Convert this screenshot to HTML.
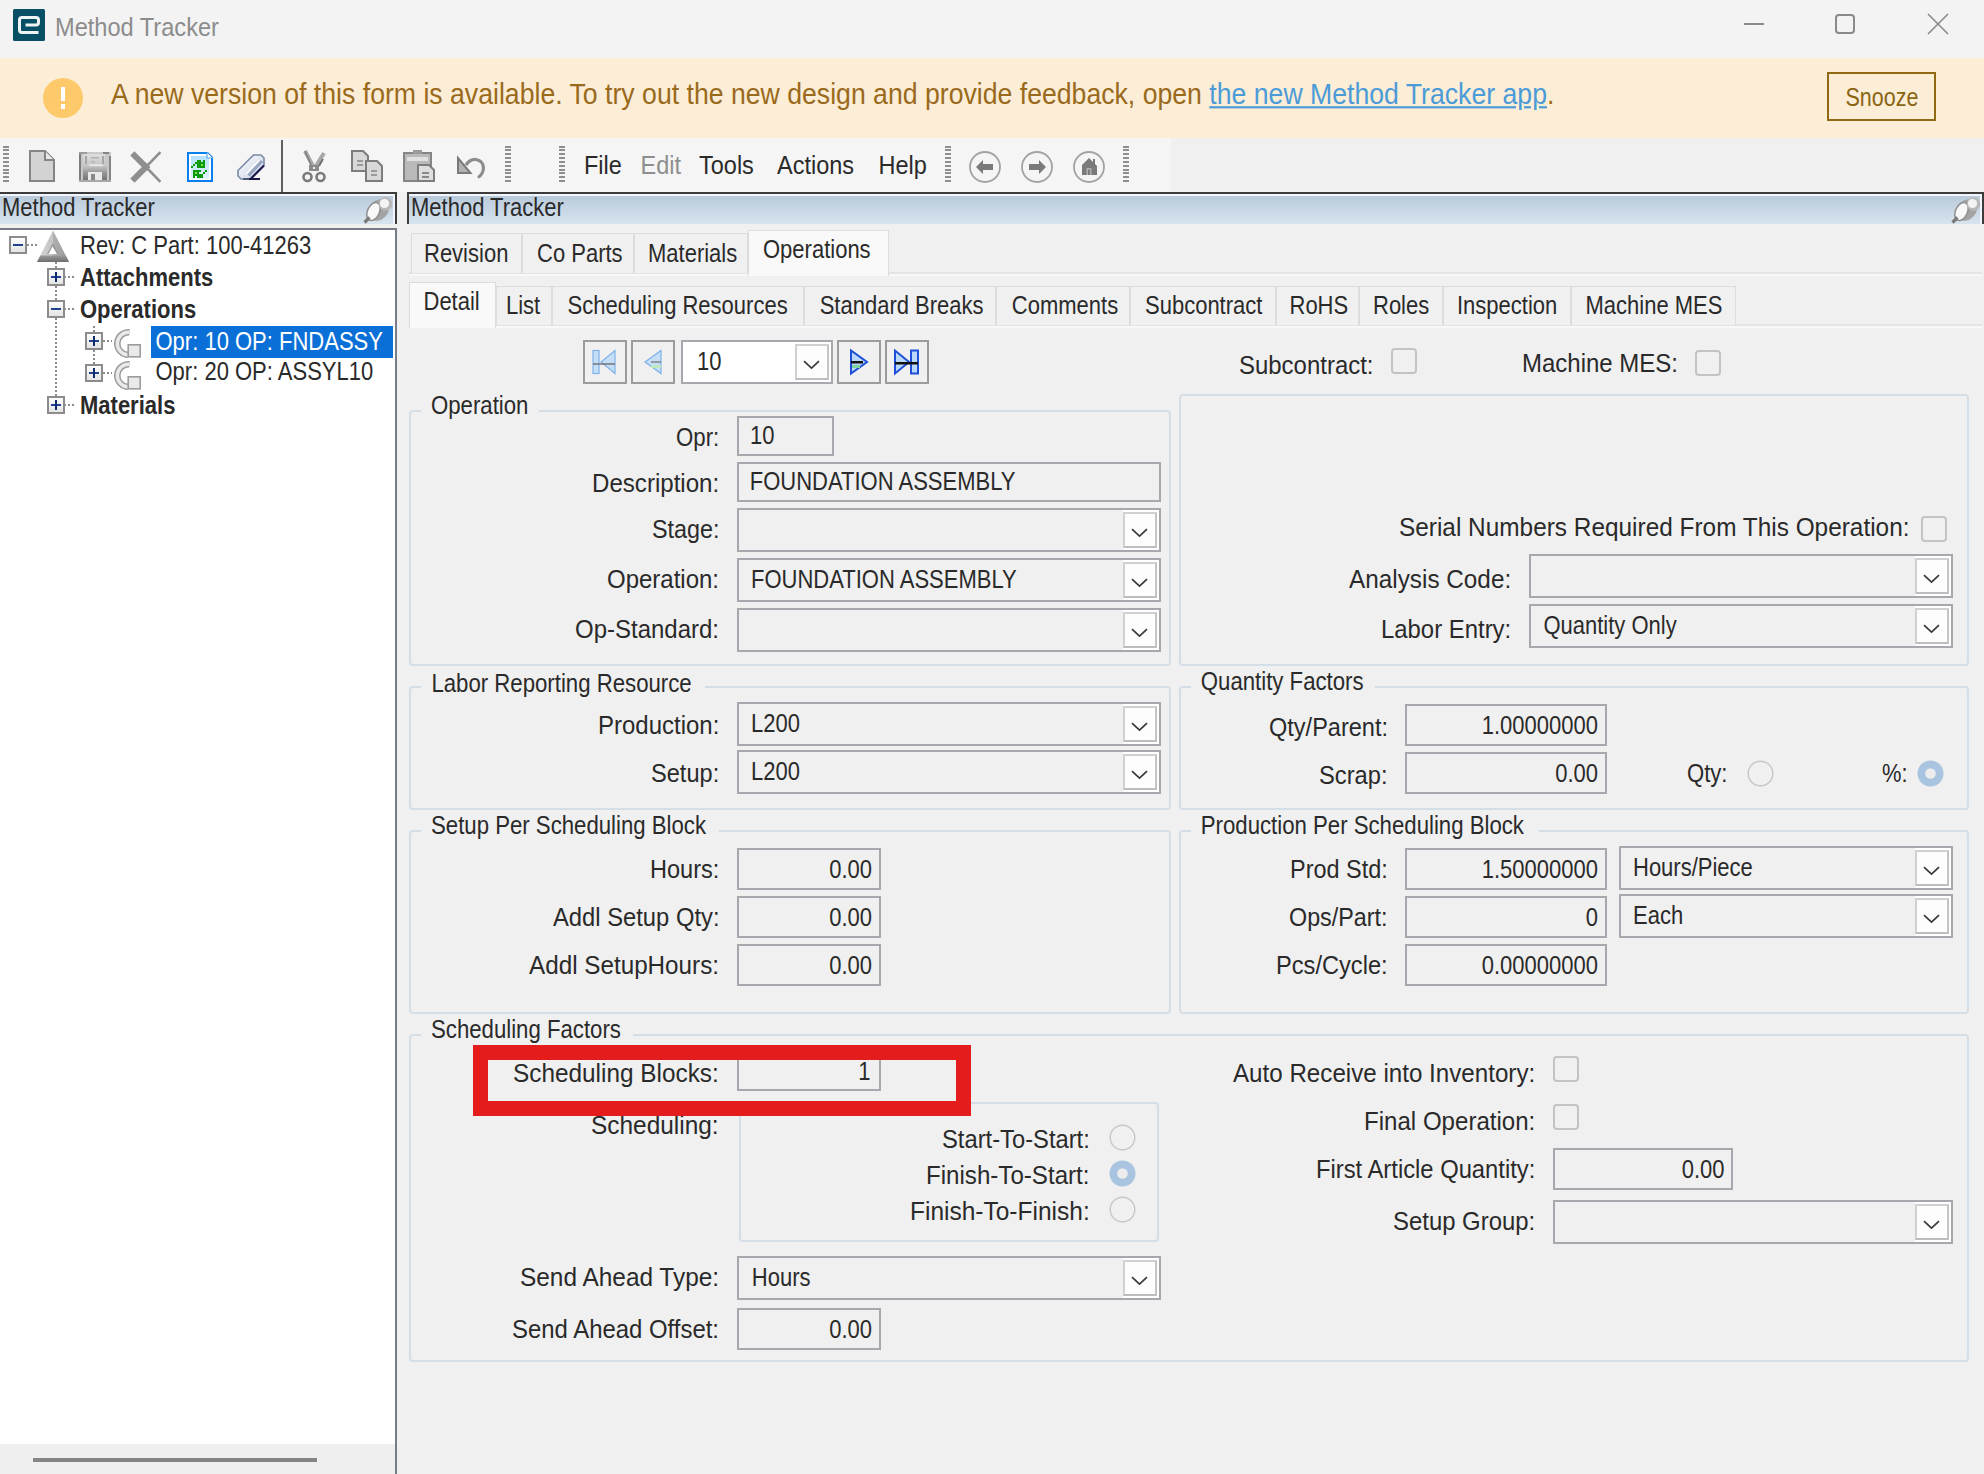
<!DOCTYPE html>
<html><head><meta charset="utf-8"><style>
html,body{margin:0;padding:0;width:1984px;height:1474px;overflow:hidden;background:#f0f0f0;font-family:"Liberation Sans", sans-serif;position:relative}
.t{position:absolute;white-space:nowrap;line-height:1;font-family:"Liberation Sans", sans-serif}
svg{display:block}
</style></head><body>
<div style="position:absolute;left:0px;top:0px;width:1984px;height:58px;background:#f3f3f3"></div>
<svg style="position:absolute;left:13px;top:9px" width="32" height="32" viewBox="0 0 32 32"><rect x="0" y="0" width="32" height="32" rx="1.5" fill="#064f64"/><path d="M12.5 16 H23 Q25.5 16 25.5 13.5 V11 Q25.5 8.5 23 8.5 H9 Q6.5 8.5 6.5 11 V21 Q6.5 23.5 9 23.5 H25.5" fill="none" stroke="#eef4f6" stroke-width="3"/></svg>
<div class="t" style="left:55.00px;top:17px;font-size:23.6px;color:#8c8c8c;transform:scale(1.0000,1.0840);transform-origin:left 19px;">Method Tracker</div>
<svg style="position:absolute;left:1740px;top:10px" width="28" height="28" viewBox="0 0 28 28"><line x1="4" y1="14" x2="24" y2="14" stroke="#8a8a8a" stroke-width="2"/></svg>
<svg style="position:absolute;left:1833px;top:12px" width="24" height="24" viewBox="0 0 24 24"><rect x="3" y="3" width="18" height="18" rx="3" fill="none" stroke="#8a8a8a" stroke-width="2"/></svg>
<svg style="position:absolute;left:1925px;top:11px" width="26" height="26" viewBox="0 0 26 26"><path d="M3 3 L23 23 M23 3 L3 23" stroke="#8a8a8a" stroke-width="1.6"/></svg>
<div style="position:absolute;left:0px;top:58px;width:1984px;height:80px;background:#fcedd6"></div>
<svg style="position:absolute;left:43px;top:78px" width="40" height="40" viewBox="0 0 40 40"><circle cx="20" cy="20" r="20" fill="#fdc96a"/><rect x="18" y="9" width="4" height="14" fill="#fff"/><rect x="18" y="26" width="4" height="5" fill="#fff"/></svg>
<div class="t" style="left:111.00px;top:82px;font-size:26.65px;color:#9a6a1c;transform:scale(1.0000,1.0908);transform-origin:left 22px;">A new version of this form is available. To try out the new design and provide feedback, open <span style="color:#4b9bd8;text-decoration:underline;text-underline-offset:2px">the new Method Tracker app</span>.</div>
<div style="position:absolute;left:1827px;top:72px;width:109px;height:49px;box-sizing:border-box;border:2px solid #8f6a12"></div>
<div class="t" style="left:1845.50px;top:89px;font-size:21.5px;color:#8a6514;transform:scale(1.0000,1.1898);transform-origin:left 17px;">Snooze</div>
<div style="position:absolute;left:0px;top:138px;width:1171px;height:54px;background:#f5f5f5"></div>
<svg style="position:absolute;left:3px;top:146px" width="6" height="38" viewBox="0 0 6 38"><rect x="0" y="0" width="6" height="2" fill="#8e8e8e"/><rect x="0" y="3" width="6" height="2" fill="#8e8e8e"/><rect x="0" y="7" width="6" height="2" fill="#8e8e8e"/><rect x="0" y="11" width="6" height="2" fill="#8e8e8e"/><rect x="0" y="15" width="6" height="2" fill="#8e8e8e"/><rect x="0" y="19" width="6" height="2" fill="#8e8e8e"/><rect x="0" y="23" width="6" height="2" fill="#8e8e8e"/><rect x="0" y="26" width="6" height="2" fill="#8e8e8e"/><rect x="0" y="30" width="6" height="2" fill="#8e8e8e"/><rect x="0" y="34" width="6" height="2" fill="#8e8e8e"/></svg>
<svg style="position:absolute;left:505px;top:146px" width="6" height="38" viewBox="0 0 6 38"><rect x="0" y="0" width="6" height="2" fill="#8e8e8e"/><rect x="0" y="3" width="6" height="2" fill="#8e8e8e"/><rect x="0" y="7" width="6" height="2" fill="#8e8e8e"/><rect x="0" y="11" width="6" height="2" fill="#8e8e8e"/><rect x="0" y="15" width="6" height="2" fill="#8e8e8e"/><rect x="0" y="19" width="6" height="2" fill="#8e8e8e"/><rect x="0" y="23" width="6" height="2" fill="#8e8e8e"/><rect x="0" y="26" width="6" height="2" fill="#8e8e8e"/><rect x="0" y="30" width="6" height="2" fill="#8e8e8e"/><rect x="0" y="34" width="6" height="2" fill="#8e8e8e"/></svg>
<svg style="position:absolute;left:559px;top:146px" width="6" height="38" viewBox="0 0 6 38"><rect x="0" y="0" width="6" height="2" fill="#8e8e8e"/><rect x="0" y="3" width="6" height="2" fill="#8e8e8e"/><rect x="0" y="7" width="6" height="2" fill="#8e8e8e"/><rect x="0" y="11" width="6" height="2" fill="#8e8e8e"/><rect x="0" y="15" width="6" height="2" fill="#8e8e8e"/><rect x="0" y="19" width="6" height="2" fill="#8e8e8e"/><rect x="0" y="23" width="6" height="2" fill="#8e8e8e"/><rect x="0" y="26" width="6" height="2" fill="#8e8e8e"/><rect x="0" y="30" width="6" height="2" fill="#8e8e8e"/><rect x="0" y="34" width="6" height="2" fill="#8e8e8e"/></svg>
<svg style="position:absolute;left:945px;top:146px" width="6" height="38" viewBox="0 0 6 38"><rect x="0" y="0" width="6" height="2" fill="#8e8e8e"/><rect x="0" y="3" width="6" height="2" fill="#8e8e8e"/><rect x="0" y="7" width="6" height="2" fill="#8e8e8e"/><rect x="0" y="11" width="6" height="2" fill="#8e8e8e"/><rect x="0" y="15" width="6" height="2" fill="#8e8e8e"/><rect x="0" y="19" width="6" height="2" fill="#8e8e8e"/><rect x="0" y="23" width="6" height="2" fill="#8e8e8e"/><rect x="0" y="26" width="6" height="2" fill="#8e8e8e"/><rect x="0" y="30" width="6" height="2" fill="#8e8e8e"/><rect x="0" y="34" width="6" height="2" fill="#8e8e8e"/></svg>
<svg style="position:absolute;left:1123px;top:146px" width="6" height="38" viewBox="0 0 6 38"><rect x="0" y="0" width="6" height="2" fill="#8e8e8e"/><rect x="0" y="3" width="6" height="2" fill="#8e8e8e"/><rect x="0" y="7" width="6" height="2" fill="#8e8e8e"/><rect x="0" y="11" width="6" height="2" fill="#8e8e8e"/><rect x="0" y="15" width="6" height="2" fill="#8e8e8e"/><rect x="0" y="19" width="6" height="2" fill="#8e8e8e"/><rect x="0" y="23" width="6" height="2" fill="#8e8e8e"/><rect x="0" y="26" width="6" height="2" fill="#8e8e8e"/><rect x="0" y="30" width="6" height="2" fill="#8e8e8e"/><rect x="0" y="34" width="6" height="2" fill="#8e8e8e"/></svg>
<div style="position:absolute;left:281px;top:140px;width:2px;height:52px;background:#606060"></div>
<svg style="position:absolute;left:29px;top:150px" width="26" height="32" viewBox="0 0 26 32"><path d="M1 1 H16 L25 10 V31 H1 Z" fill="#d3d3d3" stroke="#858585" stroke-width="2"/><path d="M16 1 V10 H25" fill="#e8e8e8" stroke="#858585" stroke-width="2"/></svg>
<svg style="position:absolute;left:79px;top:152px" width="32" height="30" viewBox="0 0 32 30"><defs><linearGradient id="sg1" x1="0" y1="0" x2="0" y2="1"><stop offset="0" stop-color="#dedede"/><stop offset="1" stop-color="#c6c6c6"/></linearGradient><linearGradient id="sg2" x1="0" y1="0" x2="0" y2="1"><stop offset="0" stop-color="#c4c4c4"/><stop offset="1" stop-color="#9c9c9c"/></linearGradient><linearGradient id="sg3" x1="0" y1="0" x2="0" y2="1"><stop offset="0" stop-color="#9a9a9a"/><stop offset="1" stop-color="#757575"/></linearGradient></defs><rect x="0" y="0" width="32" height="30" fill="#c8c8c8"/><rect x="4" y="2" width="22" height="12" fill="url(#sg1)"/><rect x="4" y="14" width="24" height="6" fill="url(#sg2)"/><rect x="4" y="20" width="24" height="8" fill="url(#sg3)"/><rect x="9" y="20" width="14" height="8" fill="#e9e9e9"/><rect x="12" y="22" width="4" height="6" fill="#888"/><rect x="0" y="2" width="2" height="26" fill="#7c7c7c"/><rect x="30" y="4" width="2" height="24" fill="#858585"/><rect x="0" y="0" width="8" height="2" fill="#9c9c9c"/><rect x="24" y="0" width="6" height="2" fill="#858585"/><rect x="0" y="28" width="32" height="2" fill="#a8a8a8"/><rect x="6" y="4" width="2" height="8" fill="#a6a6a6"/><rect x="23" y="4" width="2" height="8" fill="#a6a6a6"/><rect x="12" y="5" width="8" height="1.5" fill="#b0b0b0"/><rect x="12" y="9" width="4" height="1.5" fill="#b4b4b4"/><rect x="10" y="12.5" width="14" height="1.5" fill="#ececec"/></svg>
<svg style="position:absolute;left:128px;top:148px" width="40" height="38" viewBox="0 0 40 38"><g stroke="#8e8e8e" stroke-linecap="square"><path d="M6.5 7.5 L18 19" stroke-width="6"/><path d="M18 19 L31.5 5" stroke-width="2.6"/><path d="M6.5 30.5 L18 19" stroke-width="6"/><path d="M18 19 L31.5 33" stroke-width="2.6"/></g></svg>
<svg style="position:absolute;left:183px;top:148px" width="35" height="38" viewBox="0 0 35 38"><defs><linearGradient id="rg" x1="0" y1="0" x2="0" y2="1"><stop offset="0" stop-color="#b4e0fb"/><stop offset="1" stop-color="#e4f5ff"/></linearGradient></defs><path d="M5 5 H24.5 L29 9.5 V33 H5 Z" fill="#fff" stroke="#0a7ff0" stroke-width="2"/><rect x="8" y="8" width="18" height="23" fill="url(#rg)"/><path d="M24 4.5 V10 H29.5" fill="#fff" stroke="#5ea8ee" stroke-width="1.2"/><rect x="14" y="12" width="4" height="2" fill="#0a9a0a"/><rect x="20" y="12" width="2" height="2" fill="#0a9a0a"/><rect x="12" y="14" width="10" height="2" fill="#0a9a0a"/><rect x="10" y="16" width="2" height="2" fill="#0a9a0a"/><rect x="14" y="16" width="8" height="2" fill="#0a9a0a"/><rect x="8" y="18" width="2" height="2" fill="#0a9a0a"/><rect x="14" y="18" width="8" height="2" fill="#0a9a0a"/><rect x="10" y="22" width="8" height="2" fill="#0a9a0a"/><rect x="22" y="22" width="2" height="2" fill="#0a9a0a"/><rect x="10" y="24" width="6" height="2" fill="#0a9a0a"/><rect x="20" y="24" width="2" height="2" fill="#0a9a0a"/><rect x="10" y="26" width="10" height="2" fill="#0a9a0a"/><rect x="10" y="28" width="2" height="2" fill="#0a9a0a"/><rect x="14" y="28" width="6" height="2" fill="#0a9a0a"/><rect x="18" y="16" width="2" height="2" fill="#7ae04a"/><rect x="12" y="24" width="2" height="2" fill="#7ae04a"/></svg>
<svg style="position:absolute;left:233px;top:148px" width="38" height="38" viewBox="0 0 38 38"><defs><linearGradient id="eg" x1="0" y1="0" x2="1" y2="1"><stop offset="0" stop-color="#ffffff"/><stop offset="1" stop-color="#c5cee0"/></linearGradient></defs><path d="M5 22.5 L20.5 7 H28 L31 10 V17.5 L17.5 31 H8 L5 28 Z" fill="url(#eg)" stroke="#7c8aa6" stroke-width="1.6"/><path d="M29 13 L15.5 27.5" stroke="#98a6c2" stroke-width="3.2"/><path d="M26.5 12 L13 26" stroke="#ffffff" stroke-width="1.4"/><path d="M31 17.5 L18 30.5" stroke="#1d1548" stroke-width="2"/><path d="M16 31 H27" stroke="#1d1548" stroke-width="2"/><path d="M10 31 H16" stroke="#4a5a78" stroke-width="2"/></svg>
<svg style="position:absolute;left:298px;top:146px" width="34" height="40" viewBox="0 0 34 40"><path d="M7 5 L15 20" stroke="#a8a8a8" stroke-width="4"/><path d="M7 5 L13 19" stroke="#7c7c7c" stroke-width="1.5"/><path d="M26 7 L18 20" stroke="#a8a8a8" stroke-width="4"/><path d="M25 13 L21 20" stroke="#6c6c6c" stroke-width="1.8"/><rect x="11" y="19" width="10" height="6" fill="#8a8a8a"/><rect x="15" y="21" width="2" height="2" fill="#f0f0f0"/><circle cx="9.5" cy="31" r="4" fill="#f4f4f4" stroke="#7a7a7a" stroke-width="2.6"/><circle cx="22.5" cy="31" r="4" fill="#f4f4f4" stroke="#7a7a7a" stroke-width="2.6"/></svg>
<svg style="position:absolute;left:351px;top:150px" width="33" height="32" viewBox="0 0 33 32"><path d="M1 1 H12 L17 6 V21 H1 Z" fill="#d8d8d8" stroke="#7d7d7d" stroke-width="2"/><rect x="6" y="10" width="6" height="2" fill="#999"/><rect x="6" y="14" width="6" height="2" fill="#999"/><path d="M15 11 H26 L31 16 V31 H15 Z" fill="#d8d8d8" stroke="#7d7d7d" stroke-width="2"/><rect x="20" y="20" width="6" height="2" fill="#999"/><rect x="20" y="24" width="6" height="2" fill="#999"/></svg>
<svg style="position:absolute;left:403px;top:150px" width="33" height="32" viewBox="0 0 33 32"><rect x="1" y="3" width="27" height="28" fill="#b9b9b9" stroke="#858585" stroke-width="2"/><rect x="4" y="7" width="21" height="4" fill="#e0e0e0"/><rect x="10" y="0" width="9" height="4" fill="#9a9a9a"/><path d="M15 15 H26 L31 20 V31 H15 Z" fill="#dedede" stroke="#7d7d7d" stroke-width="2"/><rect x="19" y="22" width="7" height="2" fill="#888"/><rect x="19" y="26" width="7" height="2" fill="#888"/></svg>
<svg style="position:absolute;left:452px;top:148px" width="38" height="38" viewBox="0 0 38 38"><path d="M14 17 Q18 11 24 11.5 Q31.5 13 31.5 20 Q31 26.5 26 29.5" fill="none" stroke="#8c8c8c" stroke-width="3.2"/><path d="M6 10 V25 H18.5 Z" fill="#b2b2b2" stroke="#7a7a7a" stroke-width="2"/></svg>
<div class="t" style="left:584.00px;top:155px;font-size:23.5px;color:#2a2a2a;transform:scale(1.0000,1.0886);transform-origin:left 19px;">File</div>
<div class="t" style="left:640.50px;top:155px;font-size:23.5px;color:#8e8e8e;transform:scale(1.0000,1.0886);transform-origin:left 19px;">Edit</div>
<div class="t" style="left:699.00px;top:155px;font-size:23.5px;color:#2a2a2a;transform:scale(1.0000,1.0886);transform-origin:left 19px;">Tools</div>
<div class="t" style="left:777.00px;top:155px;font-size:23.5px;color:#2a2a2a;transform:scale(1.0000,1.0886);transform-origin:left 19px;">Actions</div>
<div class="t" style="left:878.50px;top:155px;font-size:23.5px;color:#2a2a2a;transform:scale(1.0000,1.0886);transform-origin:left 19px;">Help</div>
<svg style="position:absolute;left:968px;top:150px" width="34" height="34" viewBox="0 0 34 34"><circle cx="17" cy="17" r="15" fill="none" stroke="#a2a2a2" stroke-width="1.8"/><path d="M8 17 L15 10 V14 H25 V20 H15 V24 Z" fill="#7a7a7a"/></svg>
<svg style="position:absolute;left:1020px;top:150px" width="34" height="34" viewBox="0 0 34 34"><circle cx="17" cy="17" r="15" fill="none" stroke="#a2a2a2" stroke-width="1.8"/><path d="M26 17 L19 10 V14 H9 V20 H19 V24 Z" fill="#7a7a7a"/></svg>
<svg style="position:absolute;left:1072px;top:150px" width="34" height="34" viewBox="0 0 34 34"><circle cx="17" cy="17" r="15" fill="none" stroke="#a2a2a2" stroke-width="1.8"/><path d="M10 25 V15 L17 8 L21 12 V9 H23 V14 L25 16 V25 Z" fill="#7a7a7a"/><rect x="14.5" y="18" width="5" height="7" fill="#b0b0b0"/><rect x="16" y="19.5" width="2" height="5.5" fill="#7a7a7a"/></svg>
<div style="position:absolute;left:0px;top:192px;width:397px;height:2px;background:#3c3c3c"></div>
<div style="position:absolute;left:395px;top:192px;width:2px;height:32px;background:#3c3c3c"></div>
<div style="position:absolute;left:0px;top:194px;width:395px;height:30px;background:#f2f6fc"></div>
<div style="position:absolute;left:0px;top:196px;width:393px;height:28px;background:linear-gradient(#b9cada,#d7e4f0)"></div>
<div class="t" style="left:2.00px;top:198px;font-size:22px;color:#2a2a2a;transform:scale(1.0000,1.1628);transform-origin:left 18px;">Method Tracker</div>
<svg style="position:absolute;left:363px;top:196px" width="30" height="28" viewBox="0 0 30 28"><ellipse cx="15.5" cy="14" rx="12" ry="9.5" transform="rotate(-45 15.5 14)" fill="#a3a3a3"/><ellipse cx="10.5" cy="15.5" rx="6" ry="9.5" transform="rotate(25 10.5 15.5)" fill="#f8f8f8" stroke="#8e8e8e" stroke-width="1.6"/><circle cx="22.5" cy="8" r="6.8" fill="#b8b8b8"/><circle cx="21.5" cy="7.5" r="4.6" fill="#f4f4f4"/><path d="M1.5 26.5 L6.5 21.5" stroke="#7a7a7a" stroke-width="3.2"/></svg>
<div style="position:absolute;left:0px;top:228px;width:397px;height:1246px;background:#fff"></div>
<div style="position:absolute;left:0px;top:228px;width:397px;height:2px;background:#747b87"></div>
<div style="position:absolute;left:395px;top:228px;width:2px;height:1246px;background:#777c86"></div>
<div style="position:absolute;left:0px;top:1444px;width:395px;height:30px;background:#efefef"></div>
<div style="position:absolute;left:33px;top:1458px;width:284px;height:4px;background:#858585"></div>
<div style="position:absolute;left:55px;top:262px;width:2px;height:143px;background:repeating-linear-gradient(180deg,#8c8c8c 0 2px,transparent 2px 4px)"></div>
<div style="position:absolute;left:27px;top:244px;width:10px;height:2px;background:repeating-linear-gradient(90deg,#8c8c8c 0 2px,transparent 2px 4px)"></div>
<div style="position:absolute;left:64px;top:276px;width:12px;height:2px;background:repeating-linear-gradient(90deg,#8c8c8c 0 2px,transparent 2px 4px)"></div>
<div style="position:absolute;left:64px;top:308px;width:12px;height:2px;background:repeating-linear-gradient(90deg,#8c8c8c 0 2px,transparent 2px 4px)"></div>
<div style="position:absolute;left:64px;top:404px;width:12px;height:2px;background:repeating-linear-gradient(90deg,#8c8c8c 0 2px,transparent 2px 4px)"></div>
<div style="position:absolute;left:93px;top:326px;width:2px;height:40px;background:repeating-linear-gradient(180deg,#8c8c8c 0 2px,transparent 2px 4px)"></div>
<div style="position:absolute;left:103px;top:340px;width:9px;height:2px;background:repeating-linear-gradient(90deg,#8c8c8c 0 2px,transparent 2px 4px)"></div>
<div style="position:absolute;left:103px;top:372px;width:9px;height:2px;background:repeating-linear-gradient(90deg,#8c8c8c 0 2px,transparent 2px 4px)"></div>
<svg style="position:absolute;left:9px;top:236px" width="18" height="18" viewBox="0 0 18 18"><defs><linearGradient id="pg" x1="0" y1="0" x2="0" y2="1"><stop offset="0" stop-color="#ffffff"/><stop offset="1" stop-color="#e2e2e2"/></linearGradient></defs><rect x="1" y="1" width="16" height="16" fill="url(#pg)" stroke="#8c8c8c" stroke-width="2"/><rect x="4" y="8" width="10" height="2" fill="#22418f"/></svg>
<svg style="position:absolute;left:37px;top:230px" width="32" height="32" viewBox="0 0 32 32"><defs><linearGradient id="tg" x1="0" y1="0" x2="1" y2="0"><stop offset="0" stop-color="#d6d6d6"/><stop offset="0.5" stop-color="#c4c4c4"/><stop offset="0.51" stop-color="#b0b0b0"/><stop offset="1" stop-color="#989898"/></linearGradient><linearGradient id="tg2" x1="0" y1="0" x2="0" y2="1"><stop offset="0" stop-color="#9a9a9a"/><stop offset="1" stop-color="#6e6e6e"/></linearGradient></defs><path d="M16 0.5 L32 32 H0 Z" fill="url(#tg)"/><path d="M3.3 25.5 H28.7 L32 32 H0 Z" fill="url(#tg2)"/><path d="M16 13 L22 24 H10 Z" fill="#9a9a9a"/><path d="M15.5 16.5 L20 24 H11.5 Z" fill="#ffffff"/></svg>
<div class="t" style="left:80.00px;top:236px;font-size:22px;color:#2a2a2a;transform:scale(1.0000,1.1628);transform-origin:left 18px;">Rev: C Part: 100-41263</div>
<svg style="position:absolute;left:47px;top:268px" width="18" height="18" viewBox="0 0 18 18"><defs><linearGradient id="pg" x1="0" y1="0" x2="0" y2="1"><stop offset="0" stop-color="#ffffff"/><stop offset="1" stop-color="#e2e2e2"/></linearGradient></defs><rect x="1" y="1" width="16" height="16" fill="url(#pg)" stroke="#8c8c8c" stroke-width="2"/><rect x="4" y="8" width="10" height="2" fill="#22418f"/><rect x="8" y="4" width="2" height="10" fill="#102a70"/></svg>
<div class="t" style="left:80.00px;top:268px;font-size:22px;color:#2a2a2a;font-weight:bold;transform:scale(1.0000,1.1628);transform-origin:left 18px;">Attachments</div>
<svg style="position:absolute;left:47px;top:300px" width="18" height="18" viewBox="0 0 18 18"><defs><linearGradient id="pg" x1="0" y1="0" x2="0" y2="1"><stop offset="0" stop-color="#ffffff"/><stop offset="1" stop-color="#e2e2e2"/></linearGradient></defs><rect x="1" y="1" width="16" height="16" fill="url(#pg)" stroke="#8c8c8c" stroke-width="2"/><rect x="4" y="8" width="10" height="2" fill="#22418f"/></svg>
<div class="t" style="left:80.00px;top:300px;font-size:22px;color:#2a2a2a;font-weight:bold;transform:scale(1.0000,1.1628);transform-origin:left 18px;">Operations</div>
<svg style="position:absolute;left:85px;top:332px" width="18" height="18" viewBox="0 0 18 18"><defs><linearGradient id="pg" x1="0" y1="0" x2="0" y2="1"><stop offset="0" stop-color="#ffffff"/><stop offset="1" stop-color="#e2e2e2"/></linearGradient></defs><rect x="1" y="1" width="16" height="16" fill="url(#pg)" stroke="#8c8c8c" stroke-width="2"/><rect x="4" y="8" width="10" height="2" fill="#22418f"/><rect x="8" y="4" width="2" height="10" fill="#102a70"/></svg>
<svg style="position:absolute;left:113px;top:328px" width="30" height="30" viewBox="0 0 30 30"><path d="M16.5 4.2 A11.2 11.2 0 1 0 15 27" fill="none" stroke="#9c9c9c" stroke-width="6.5"/><path d="M16.5 4.2 A11.2 11.2 0 1 0 15 27" fill="none" stroke="#e9e9e9" stroke-width="3.5"/><rect x="15.2" y="16.8" width="12" height="12" fill="#e9e9e9" stroke="#9c9c9c" stroke-width="1.6"/></svg>
<div style="position:absolute;left:151px;top:326px;width:242px;height:32px;background:#0a6fd6"></div>
<div class="t" style="left:155.50px;top:332px;font-size:22px;color:#fff;transform:scale(1.0000,1.1628);transform-origin:left 18px;">Opr: 10 OP: FNDASSY</div>
<svg style="position:absolute;left:85px;top:364px" width="18" height="18" viewBox="0 0 18 18"><defs><linearGradient id="pg" x1="0" y1="0" x2="0" y2="1"><stop offset="0" stop-color="#ffffff"/><stop offset="1" stop-color="#e2e2e2"/></linearGradient></defs><rect x="1" y="1" width="16" height="16" fill="url(#pg)" stroke="#8c8c8c" stroke-width="2"/><rect x="4" y="8" width="10" height="2" fill="#22418f"/><rect x="8" y="4" width="2" height="10" fill="#102a70"/></svg>
<svg style="position:absolute;left:113px;top:360px" width="30" height="30" viewBox="0 0 30 30"><path d="M16.5 4.2 A11.2 11.2 0 1 0 15 27" fill="none" stroke="#9c9c9c" stroke-width="6.5"/><path d="M16.5 4.2 A11.2 11.2 0 1 0 15 27" fill="none" stroke="#e9e9e9" stroke-width="3.5"/><rect x="15.2" y="16.8" width="12" height="12" fill="#e9e9e9" stroke="#9c9c9c" stroke-width="1.6"/></svg>
<div class="t" style="left:155.50px;top:362px;font-size:22px;color:#2a2a2a;transform:scale(1.0000,1.1628);transform-origin:left 18px;">Opr: 20 OP: ASSYL10</div>
<svg style="position:absolute;left:47px;top:396px" width="18" height="18" viewBox="0 0 18 18"><defs><linearGradient id="pg" x1="0" y1="0" x2="0" y2="1"><stop offset="0" stop-color="#ffffff"/><stop offset="1" stop-color="#e2e2e2"/></linearGradient></defs><rect x="1" y="1" width="16" height="16" fill="url(#pg)" stroke="#8c8c8c" stroke-width="2"/><rect x="4" y="8" width="10" height="2" fill="#22418f"/><rect x="8" y="4" width="2" height="10" fill="#102a70"/></svg>
<div class="t" style="left:80.00px;top:396px;font-size:22px;color:#2a2a2a;font-weight:bold;transform:scale(1.0000,1.1628);transform-origin:left 18px;">Materials</div>
<div style="position:absolute;left:407px;top:192px;width:1577px;height:2px;background:#3c3c3c"></div>
<div style="position:absolute;left:407px;top:192px;width:2px;height:32px;background:#3c3c3c"></div>
<div style="position:absolute;left:1982px;top:192px;width:2px;height:32px;background:#3c3c3c"></div>
<div style="position:absolute;left:409px;top:194px;width:1573px;height:30px;background:#f2f6fc"></div>
<div style="position:absolute;left:409px;top:196px;width:1571px;height:28px;background:linear-gradient(#b9cada,#d7e4f0)"></div>
<div class="t" style="left:411.00px;top:198px;font-size:22px;color:#2a2a2a;transform:scale(1.0000,1.1628);transform-origin:left 18px;">Method Tracker</div>
<svg style="position:absolute;left:1951px;top:196px" width="30" height="28" viewBox="0 0 30 28"><ellipse cx="15.5" cy="14" rx="12" ry="9.5" transform="rotate(-45 15.5 14)" fill="#a3a3a3"/><ellipse cx="10.5" cy="15.5" rx="6" ry="9.5" transform="rotate(25 10.5 15.5)" fill="#f8f8f8" stroke="#8e8e8e" stroke-width="1.6"/><circle cx="22.5" cy="8" r="6.8" fill="#b8b8b8"/><circle cx="21.5" cy="7.5" r="4.6" fill="#f4f4f4"/><path d="M1.5 26.5 L6.5 21.5" stroke="#7a7a7a" stroke-width="3.2"/></svg>
<div style="position:absolute;left:409px;top:272px;width:1573px;height:3px;background:#e4e4e4"></div>
<div style="position:absolute;left:409px;top:274px;width:1573px;height:2px;background:#f8f8f8"></div>
<div style="position:absolute;left:411px;top:233px;width:111px;height:40px;box-sizing:border-box;background:#f0f0f0;border:1px solid #dcdcdc;border-bottom:none"></div>
<div class="t" style="left:424.00px;top:244px;font-size:22px;color:#2a2a2a;transform:scale(1.0000,1.1628);transform-origin:left 18px;">Revision</div>
<div style="position:absolute;left:522px;top:233px;width:112px;height:40px;box-sizing:border-box;background:#f0f0f0;border:1px solid #dcdcdc;border-bottom:none"></div>
<div class="t" style="left:537.00px;top:244px;font-size:22px;color:#2a2a2a;transform:scale(1.0000,1.1628);transform-origin:left 18px;">Co Parts</div>
<div style="position:absolute;left:634px;top:233px;width:114px;height:40px;box-sizing:border-box;background:#f0f0f0;border:1px solid #dcdcdc;border-bottom:none"></div>
<div class="t" style="left:648.00px;top:244px;font-size:22px;color:#2a2a2a;transform:scale(1.0000,1.1628);transform-origin:left 18px;">Materials</div>
<div style="position:absolute;left:748px;top:230px;width:141px;height:46px;box-sizing:border-box;background:#f9f9f9;border:1px solid #dcdcdc;border-bottom:none"></div>
<div class="t" style="left:763.00px;top:240px;font-size:22px;color:#2a2a2a;transform:scale(1.0000,1.1628);transform-origin:left 18px;">Operations</div>
<div style="position:absolute;left:409px;top:324px;width:1573px;height:3px;background:#e4e4e4"></div>
<div style="position:absolute;left:409px;top:326px;width:1573px;height:2px;background:#f8f8f8"></div>
<div style="position:absolute;left:496px;top:286px;width:56px;height:39px;box-sizing:border-box;background:#f0f0f0;border:1px solid #dcdcdc;border-bottom:none"></div>
<div class="t" style="left:506.00px;top:296px;font-size:22px;color:#2a2a2a;transform:scale(1.0000,1.1628);transform-origin:left 18px;">List</div>
<div style="position:absolute;left:552px;top:286px;width:252px;height:39px;box-sizing:border-box;background:#f0f0f0;border:1px solid #dcdcdc;border-bottom:none"></div>
<div class="t" style="left:567.50px;top:296px;font-size:22px;color:#2a2a2a;transform:scale(1.0000,1.1628);transform-origin:left 18px;">Scheduling Resources</div>
<div style="position:absolute;left:804px;top:286px;width:192px;height:39px;box-sizing:border-box;background:#f0f0f0;border:1px solid #dcdcdc;border-bottom:none"></div>
<div class="t" style="left:819.70px;top:296px;font-size:22px;color:#2a2a2a;transform:scale(1.0000,1.1628);transform-origin:left 18px;">Standard Breaks</div>
<div style="position:absolute;left:996px;top:286px;width:134px;height:39px;box-sizing:border-box;background:#f0f0f0;border:1px solid #dcdcdc;border-bottom:none"></div>
<div class="t" style="left:1011.80px;top:296px;font-size:22px;color:#2a2a2a;transform:scale(1.0000,1.1628);transform-origin:left 18px;">Comments</div>
<div style="position:absolute;left:1130px;top:286px;width:146px;height:39px;box-sizing:border-box;background:#f0f0f0;border:1px solid #dcdcdc;border-bottom:none"></div>
<div class="t" style="left:1145.00px;top:296px;font-size:22px;color:#2a2a2a;transform:scale(1.0000,1.1628);transform-origin:left 18px;">Subcontract</div>
<div style="position:absolute;left:1276px;top:286px;width:83px;height:39px;box-sizing:border-box;background:#f0f0f0;border:1px solid #dcdcdc;border-bottom:none"></div>
<div class="t" style="left:1289.50px;top:296px;font-size:22px;color:#2a2a2a;transform:scale(1.0000,1.1628);transform-origin:left 18px;">RoHS</div>
<div style="position:absolute;left:1359px;top:286px;width:84px;height:39px;box-sizing:border-box;background:#f0f0f0;border:1px solid #dcdcdc;border-bottom:none"></div>
<div class="t" style="left:1373.00px;top:296px;font-size:22px;color:#2a2a2a;transform:scale(1.0000,1.1628);transform-origin:left 18px;">Roles</div>
<div style="position:absolute;left:1443px;top:286px;width:128px;height:39px;box-sizing:border-box;background:#f0f0f0;border:1px solid #dcdcdc;border-bottom:none"></div>
<div class="t" style="left:1457.00px;top:296px;font-size:22px;color:#2a2a2a;transform:scale(1.0000,1.1628);transform-origin:left 18px;">Inspection</div>
<div style="position:absolute;left:1571px;top:286px;width:165px;height:39px;box-sizing:border-box;background:#f0f0f0;border:1px solid #dcdcdc;border-bottom:none"></div>
<div class="t" style="left:1585.50px;top:296px;font-size:22px;color:#2a2a2a;transform:scale(1.0000,1.1628);transform-origin:left 18px;">Machine MES</div>
<div style="position:absolute;left:409px;top:282px;width:87px;height:46px;box-sizing:border-box;background:#f9f9f9;border:1px solid #dcdcdc;border-bottom:none"></div>
<div class="t" style="left:423.50px;top:292px;font-size:22px;color:#2a2a2a;transform:scale(1.0000,1.1628);transform-origin:left 18px;">Detail</div>
<div style="position:absolute;left:583px;top:340px;width:44px;height:44px;box-sizing:border-box;border:2px solid #9c9c9c;background:#f0f0f0"></div>
<svg style="position:absolute;left:583px;top:340px" width="44" height="44" viewBox="0 0 44 44"><rect x="10" y="10.5" width="6" height="23" fill="#c4def6" stroke="#7fb2ea" stroke-width="1.2"/><path d="M32 10.5 V33.5 L18 22 Z" fill="#c4def6" stroke="#7fb2ea" stroke-width="1.2"/><rect x="10" y="23" width="22" height="2" fill="#6f6f6f" opacity="0.7"/></svg>
<div style="position:absolute;left:631px;top:340px;width:44px;height:44px;box-sizing:border-box;border:2px solid #9c9c9c;background:#f0f0f0"></div>
<svg style="position:absolute;left:631px;top:340px" width="44" height="44" viewBox="0 0 44 44"><path d="M30 10.5 V33.5 L14 22 Z" fill="#c4def6" stroke="#7fb2ea" stroke-width="1.2"/><rect x="20" y="21" width="10" height="2" fill="#6f6f6f" opacity="0.6"/><rect x="20" y="25" width="10" height="3" fill="#bfe7c0"/></svg>
<div style="position:absolute;left:681px;top:340px;width:152px;height:44px;box-sizing:border-box;background:#fff;border:2px solid #a6a8ae"></div>
<div style="position:absolute;left:795px;top:344px;width:34px;height:36px;box-sizing:border-box;background:#fdfdfd;border:2px solid #d0d0d0;border-right-color:#c4c4c4;border-bottom-color:#bdbdbd"></div>
<svg style="position:absolute;left:803px;top:360px" width="18" height="10" viewBox="0 0 18 10"><path d="M1 1.2 L8.5 8.2 L16 1.2" fill="none" stroke="#3a3a3a" stroke-width="1.7"/></svg>
<div class="t" style="left:697.00px;top:352px;font-size:22px;color:#2a2a2a;transform:scale(1.0000,1.1628);transform-origin:left 18px;">10</div>
<div style="position:absolute;left:837px;top:340px;width:44px;height:44px;box-sizing:border-box;border:2px solid #9c9c9c;background:#f0f0f0"></div>
<svg style="position:absolute;left:837px;top:340px" width="44" height="44" viewBox="0 0 44 44"><path d="M14 10.5 V33.5 L30 22 Z" fill="#bcd8f8" stroke="#1d4fd8" stroke-width="2"/><rect x="14" y="21" width="12" height="2.5" fill="#111"/><rect x="15" y="25" width="8" height="3" fill="#7fd6a0"/></svg>
<div style="position:absolute;left:885px;top:340px;width:44px;height:44px;box-sizing:border-box;border:2px solid #9c9c9c;background:#f0f0f0"></div>
<svg style="position:absolute;left:885px;top:340px" width="44" height="44" viewBox="0 0 44 44"><path d="M10 10.5 V33.5 L24 22 Z" fill="#bcd8f8" stroke="#1d4fd8" stroke-width="2"/><rect x="26" y="10.5" width="7" height="23" fill="#bcd8f8" stroke="#1d4fd8" stroke-width="2"/><rect x="10" y="22" width="23" height="2.5" fill="#111"/></svg>
<div class="t" style="left:1239.00px;top:354px;font-size:24px;color:#2a2a2a;transform:scale(0.9981,1.0659);transform-origin:left 20px;">Subcontract:</div>
<div style="position:absolute;left:1391px;top:348px;width:26px;height:26px;box-sizing:border-box;border:2px solid #c3c3c3;border-radius:4px;background:#f0f0f0"></div>
<div class="t" style="left:1521.50px;top:352px;font-size:24px;color:#2a2a2a;transform:scale(0.9997,1.0659);transform-origin:left 20px;">Machine MES:</div>
<div style="position:absolute;left:1695px;top:350px;width:26px;height:26px;box-sizing:border-box;border:2px solid #c3c3c3;border-radius:4px;background:#f0f0f0"></div>
<div style="position:absolute;left:409px;top:410px;width:762px;height:256px;box-sizing:border-box;border:2px solid #d4dee6;border-radius:4px"></div>
<div style="position:absolute;left:421px;top:409px;width:118px;height:4px;background:#f0f0f0"></div>
<div class="t" style="left:431.00px;top:396px;font-size:22.2px;color:#2a2a2a;transform:scale(1.0000,1.1523);transform-origin:left 18px;">Operation</div>
<div class="t" style="left:675.70px;top:426px;font-size:24px;color:#2a2a2a;transform:scale(0.9272,1.0659);transform-origin:left 20px;">Opr:</div>
<div style="position:absolute;left:737px;top:416px;width:97px;height:40px;box-sizing:border-box;background:#f0f0f0;border:2px solid #a6a8ae"></div>
<div class="t" style="left:750.00px;top:426px;font-size:22px;color:#2a2a2a;transform:scale(1.0000,1.1628);transform-origin:left 18px;">10</div>
<div class="t" style="left:591.80px;top:472px;font-size:24px;color:#2a2a2a;transform:scale(1.0039,1.0659);transform-origin:left 20px;">Description:</div>
<div style="position:absolute;left:737px;top:462px;width:424px;height:40px;box-sizing:border-box;background:#f0f0f0;border:2px solid #a6a8ae"></div>
<div class="t" style="left:749.80px;top:472px;font-size:22px;color:#2a2a2a;transform:scale(1.0000,1.1628);transform-origin:left 18px;">FOUNDATION ASSEMBLY</div>
<div class="t" style="left:651.50px;top:518px;font-size:24px;color:#2a2a2a;transform:scale(0.9726,1.0659);transform-origin:left 20px;">Stage:</div>
<div style="position:absolute;left:737px;top:508px;width:424px;height:44px;box-sizing:border-box;background:#f0f0f0;border:2px solid #a6a8ae"></div>
<div style="position:absolute;left:1123px;top:510px;width:36px;height:40px;background:#fff"></div>
<div style="position:absolute;left:1123px;top:512px;width:34px;height:36px;box-sizing:border-box;background:#fdfdfd;border:2px solid #d0d0d0;border-right-color:#c4c4c4;border-bottom-color:#bdbdbd"></div>
<svg style="position:absolute;left:1131px;top:528px" width="18" height="10" viewBox="0 0 18 10"><path d="M1 1.2 L8.5 8.2 L16 1.2" fill="none" stroke="#3a3a3a" stroke-width="1.7"/></svg>
<div class="t" style="left:607.00px;top:568px;font-size:24px;color:#2a2a2a;transform:scale(0.9996,1.0659);transform-origin:left 20px;">Operation:</div>
<div style="position:absolute;left:737px;top:558px;width:424px;height:44px;box-sizing:border-box;background:#f0f0f0;border:2px solid #a6a8ae"></div>
<div class="t" style="left:751.00px;top:570px;font-size:22px;color:#2a2a2a;transform:scale(1.0000,1.1628);transform-origin:left 18px;">FOUNDATION ASSEMBLY</div>
<div style="position:absolute;left:1123px;top:560px;width:36px;height:40px;background:#fff"></div>
<div style="position:absolute;left:1123px;top:562px;width:34px;height:36px;box-sizing:border-box;background:#fdfdfd;border:2px solid #d0d0d0;border-right-color:#c4c4c4;border-bottom-color:#bdbdbd"></div>
<svg style="position:absolute;left:1131px;top:578px" width="18" height="10" viewBox="0 0 18 10"><path d="M1 1.2 L8.5 8.2 L16 1.2" fill="none" stroke="#3a3a3a" stroke-width="1.7"/></svg>
<div class="t" style="left:575.00px;top:618px;font-size:24px;color:#2a2a2a;transform:scale(0.9993,1.0659);transform-origin:left 20px;">Op-Standard:</div>
<div style="position:absolute;left:737px;top:608px;width:424px;height:44px;box-sizing:border-box;background:#f0f0f0;border:2px solid #a6a8ae"></div>
<div style="position:absolute;left:1123px;top:610px;width:36px;height:40px;background:#fff"></div>
<div style="position:absolute;left:1123px;top:612px;width:34px;height:36px;box-sizing:border-box;background:#fdfdfd;border:2px solid #d0d0d0;border-right-color:#c4c4c4;border-bottom-color:#bdbdbd"></div>
<svg style="position:absolute;left:1131px;top:628px" width="18" height="10" viewBox="0 0 18 10"><path d="M1 1.2 L8.5 8.2 L16 1.2" fill="none" stroke="#3a3a3a" stroke-width="1.7"/></svg>
<div style="position:absolute;left:1179px;top:394px;width:790px;height:272px;box-sizing:border-box;border:2px solid #d4dee6;border-radius:4px"></div>
<div class="t" style="left:1399.00px;top:516px;font-size:24px;color:#2a2a2a;transform:scale(1.0161,1.0659);transform-origin:left 20px;">Serial Numbers Required From This Operation:</div>
<div style="position:absolute;left:1921px;top:516px;width:26px;height:26px;box-sizing:border-box;border:2px solid #c3c3c3;border-radius:4px;background:#f0f0f0"></div>
<div class="t" style="left:1349.30px;top:568px;font-size:24px;color:#2a2a2a;transform:scale(1.0131,1.0659);transform-origin:left 20px;">Analysis Code:</div>
<div style="position:absolute;left:1529px;top:554px;width:424px;height:44px;box-sizing:border-box;background:#f0f0f0;border:2px solid #a6a8ae"></div>
<div style="position:absolute;left:1915px;top:556px;width:36px;height:40px;background:#fff"></div>
<div style="position:absolute;left:1915px;top:558px;width:34px;height:36px;box-sizing:border-box;background:#fdfdfd;border:2px solid #d0d0d0;border-right-color:#c4c4c4;border-bottom-color:#bdbdbd"></div>
<svg style="position:absolute;left:1923px;top:574px" width="18" height="10" viewBox="0 0 18 10"><path d="M1 1.2 L8.5 8.2 L16 1.2" fill="none" stroke="#3a3a3a" stroke-width="1.7"/></svg>
<div class="t" style="left:1381.30px;top:618px;font-size:24px;color:#2a2a2a;transform:scale(0.9958,1.0659);transform-origin:left 20px;">Labor Entry:</div>
<div style="position:absolute;left:1529px;top:604px;width:424px;height:44px;box-sizing:border-box;background:#f0f0f0;border:2px solid #a6a8ae"></div>
<div class="t" style="left:1543.40px;top:616px;font-size:22px;color:#2a2a2a;transform:scale(1.0000,1.1628);transform-origin:left 18px;">Quantity Only</div>
<div style="position:absolute;left:1915px;top:606px;width:36px;height:40px;background:#fff"></div>
<div style="position:absolute;left:1915px;top:608px;width:34px;height:36px;box-sizing:border-box;background:#fdfdfd;border:2px solid #d0d0d0;border-right-color:#c4c4c4;border-bottom-color:#bdbdbd"></div>
<svg style="position:absolute;left:1923px;top:624px" width="18" height="10" viewBox="0 0 18 10"><path d="M1 1.2 L8.5 8.2 L16 1.2" fill="none" stroke="#3a3a3a" stroke-width="1.7"/></svg>
<div style="position:absolute;left:409px;top:686px;width:762px;height:124px;box-sizing:border-box;border:2px solid #d4dee6;border-radius:4px"></div>
<div style="position:absolute;left:421px;top:685px;width:284px;height:4px;background:#f0f0f0"></div>
<div class="t" style="left:431.40px;top:674px;font-size:22.2px;color:#2a2a2a;transform:scale(1.0000,1.1523);transform-origin:left 18px;">Labor Reporting Resource</div>
<div class="t" style="left:597.70px;top:714px;font-size:24px;color:#2a2a2a;transform:scale(0.9992,1.0659);transform-origin:left 20px;">Production:</div>
<div style="position:absolute;left:737px;top:702px;width:424px;height:44px;box-sizing:border-box;background:#f0f0f0;border:2px solid #a6a8ae"></div>
<div class="t" style="left:751.00px;top:714px;font-size:22px;color:#2a2a2a;transform:scale(1.0000,1.1628);transform-origin:left 18px;">L200</div>
<div style="position:absolute;left:1123px;top:704px;width:36px;height:40px;background:#fff"></div>
<div style="position:absolute;left:1123px;top:706px;width:34px;height:36px;box-sizing:border-box;background:#fdfdfd;border:2px solid #d0d0d0;border-right-color:#c4c4c4;border-bottom-color:#bdbdbd"></div>
<svg style="position:absolute;left:1131px;top:722px" width="18" height="10" viewBox="0 0 18 10"><path d="M1 1.2 L8.5 8.2 L16 1.2" fill="none" stroke="#3a3a3a" stroke-width="1.7"/></svg>
<div class="t" style="left:650.80px;top:762px;font-size:24px;color:#2a2a2a;transform:scale(0.9827,1.0659);transform-origin:left 20px;">Setup:</div>
<div style="position:absolute;left:737px;top:750px;width:424px;height:44px;box-sizing:border-box;background:#f0f0f0;border:2px solid #a6a8ae"></div>
<div class="t" style="left:751.00px;top:762px;font-size:22px;color:#2a2a2a;transform:scale(1.0000,1.1628);transform-origin:left 18px;">L200</div>
<div style="position:absolute;left:1123px;top:752px;width:36px;height:40px;background:#fff"></div>
<div style="position:absolute;left:1123px;top:754px;width:34px;height:36px;box-sizing:border-box;background:#fdfdfd;border:2px solid #d0d0d0;border-right-color:#c4c4c4;border-bottom-color:#bdbdbd"></div>
<svg style="position:absolute;left:1131px;top:770px" width="18" height="10" viewBox="0 0 18 10"><path d="M1 1.2 L8.5 8.2 L16 1.2" fill="none" stroke="#3a3a3a" stroke-width="1.7"/></svg>
<div style="position:absolute;left:1179px;top:686px;width:790px;height:124px;box-sizing:border-box;border:2px solid #d4dee6;border-radius:4px"></div>
<div style="position:absolute;left:1191px;top:685px;width:184px;height:4px;background:#f0f0f0"></div>
<div class="t" style="left:1200.80px;top:672px;font-size:22.2px;color:#2a2a2a;transform:scale(1.0000,1.1523);transform-origin:left 18px;">Quantity Factors</div>
<div class="t" style="left:1268.50px;top:716px;font-size:24px;color:#2a2a2a;transform:scale(0.9802,1.0659);transform-origin:left 20px;">Qty/Parent:</div>
<div style="position:absolute;left:1405px;top:704px;width:202px;height:42px;box-sizing:border-box;background:#f0f0f0;border:2px solid #a6a8ae"></div>
<div class="t" style="right:386.00px;top:716px;font-size:22px;color:#2a2a2a;transform:scale(1.0000,1.1628);transform-origin:right 18px;">1.00000000</div>
<div class="t" style="left:1319.00px;top:764px;font-size:24px;color:#2a2a2a;transform:scale(0.9877,1.0659);transform-origin:left 20px;">Scrap:</div>
<div style="position:absolute;left:1405px;top:752px;width:202px;height:42px;box-sizing:border-box;background:#f0f0f0;border:2px solid #a6a8ae"></div>
<div class="t" style="right:386.00px;top:764px;font-size:22px;color:#2a2a2a;transform:scale(1.0000,1.1628);transform-origin:right 18px;">0.00</div>
<div class="t" style="left:1687.00px;top:762px;font-size:24px;color:#2a2a2a;transform:scale(0.9205,1.0659);transform-origin:left 20px;">Qty:</div>
<svg style="position:absolute;left:1747px;top:760px" width="27" height="27" viewBox="0 0 27 27"><circle cx="13.5" cy="13.5" r="12.3" fill="none" stroke="#c6c6c6" stroke-width="1.4"/></svg>
<div class="t" style="left:1882.00px;top:762px;font-size:24px;color:#2a2a2a;transform:scale(0.9107,1.0659);transform-origin:left 20px;">%:</div>
<svg style="position:absolute;left:1917px;top:760px" width="27" height="27" viewBox="0 0 27 27"><circle cx="13.5" cy="13.5" r="13" fill="#a8c4e0"/><circle cx="13.5" cy="13.5" r="5.3" fill="#ececec"/></svg>
<div style="position:absolute;left:409px;top:830px;width:762px;height:184px;box-sizing:border-box;border:2px solid #d4dee6;border-radius:4px"></div>
<div style="position:absolute;left:421px;top:829px;width:298px;height:4px;background:#f0f0f0"></div>
<div class="t" style="left:431.00px;top:816px;font-size:22.2px;color:#2a2a2a;transform:scale(1.0000,1.1523);transform-origin:left 18px;">Setup Per Scheduling Block</div>
<div class="t" style="left:649.60px;top:858px;font-size:24px;color:#2a2a2a;transform:scale(0.9816,1.0659);transform-origin:left 20px;">Hours:</div>
<div style="position:absolute;left:737px;top:848px;width:144px;height:42px;box-sizing:border-box;background:#f0f0f0;border:2px solid #a6a8ae"></div>
<div class="t" style="right:1112.00px;top:860px;font-size:22px;color:#2a2a2a;transform:scale(1.0000,1.1628);transform-origin:right 18px;">0.00</div>
<div class="t" style="left:552.50px;top:906px;font-size:24px;color:#2a2a2a;transform:scale(0.9905,1.0659);transform-origin:left 20px;">Addl Setup Qty:</div>
<div style="position:absolute;left:737px;top:896px;width:144px;height:42px;box-sizing:border-box;background:#f0f0f0;border:2px solid #a6a8ae"></div>
<div class="t" style="right:1112.00px;top:908px;font-size:22px;color:#2a2a2a;transform:scale(1.0000,1.1628);transform-origin:right 18px;">0.00</div>
<div class="t" style="left:529.00px;top:954px;font-size:24px;color:#2a2a2a;transform:scale(1.0101,1.0659);transform-origin:left 20px;">Addl SetupHours:</div>
<div style="position:absolute;left:737px;top:944px;width:144px;height:42px;box-sizing:border-box;background:#f0f0f0;border:2px solid #a6a8ae"></div>
<div class="t" style="right:1112.00px;top:956px;font-size:22px;color:#2a2a2a;transform:scale(1.0000,1.1628);transform-origin:right 18px;">0.00</div>
<div style="position:absolute;left:1179px;top:830px;width:790px;height:184px;box-sizing:border-box;border:2px solid #d4dee6;border-radius:4px"></div>
<div style="position:absolute;left:1191px;top:829px;width:348px;height:4px;background:#f0f0f0"></div>
<div class="t" style="left:1200.80px;top:816px;font-size:22.2px;color:#2a2a2a;transform:scale(1.0000,1.1523);transform-origin:left 18px;">Production Per Scheduling Block</div>
<div class="t" style="left:1289.80px;top:858px;font-size:24px;color:#2a2a2a;transform:scale(0.9765,1.0659);transform-origin:left 20px;">Prod Std:</div>
<div style="position:absolute;left:1405px;top:848px;width:202px;height:42px;box-sizing:border-box;background:#f0f0f0;border:2px solid #a6a8ae"></div>
<div class="t" style="right:386.00px;top:860px;font-size:22px;color:#2a2a2a;transform:scale(1.0000,1.1628);transform-origin:right 18px;">1.50000000</div>
<div class="t" style="left:1289.00px;top:906px;font-size:24px;color:#2a2a2a;transform:scale(0.9719,1.0659);transform-origin:left 20px;">Ops/Part:</div>
<div style="position:absolute;left:1405px;top:896px;width:202px;height:42px;box-sizing:border-box;background:#f0f0f0;border:2px solid #a6a8ae"></div>
<div class="t" style="right:386.00px;top:908px;font-size:22px;color:#2a2a2a;transform:scale(1.0000,1.1628);transform-origin:right 18px;">0</div>
<div class="t" style="left:1275.90px;top:954px;font-size:24px;color:#2a2a2a;transform:scale(0.9846,1.0659);transform-origin:left 20px;">Pcs/Cycle:</div>
<div style="position:absolute;left:1405px;top:944px;width:202px;height:42px;box-sizing:border-box;background:#f0f0f0;border:2px solid #a6a8ae"></div>
<div class="t" style="right:386.00px;top:956px;font-size:22px;color:#2a2a2a;transform:scale(1.0000,1.1628);transform-origin:right 18px;">0.00000000</div>
<div style="position:absolute;left:1619px;top:846px;width:334px;height:44px;box-sizing:border-box;background:#f0f0f0;border:2px solid #a6a8ae"></div>
<div class="t" style="left:1633.00px;top:858px;font-size:22px;color:#2a2a2a;transform:scale(1.0000,1.1628);transform-origin:left 18px;">Hours/Piece</div>
<div style="position:absolute;left:1915px;top:848px;width:36px;height:40px;background:#fff"></div>
<div style="position:absolute;left:1915px;top:850px;width:34px;height:36px;box-sizing:border-box;background:#fdfdfd;border:2px solid #d0d0d0;border-right-color:#c4c4c4;border-bottom-color:#bdbdbd"></div>
<svg style="position:absolute;left:1923px;top:866px" width="18" height="10" viewBox="0 0 18 10"><path d="M1 1.2 L8.5 8.2 L16 1.2" fill="none" stroke="#3a3a3a" stroke-width="1.7"/></svg>
<div style="position:absolute;left:1619px;top:894px;width:334px;height:44px;box-sizing:border-box;background:#f0f0f0;border:2px solid #a6a8ae"></div>
<div class="t" style="left:1633.00px;top:906px;font-size:22px;color:#2a2a2a;transform:scale(1.0000,1.1628);transform-origin:left 18px;">Each</div>
<div style="position:absolute;left:1915px;top:896px;width:36px;height:40px;background:#fff"></div>
<div style="position:absolute;left:1915px;top:898px;width:34px;height:36px;box-sizing:border-box;background:#fdfdfd;border:2px solid #d0d0d0;border-right-color:#c4c4c4;border-bottom-color:#bdbdbd"></div>
<svg style="position:absolute;left:1923px;top:914px" width="18" height="10" viewBox="0 0 18 10"><path d="M1 1.2 L8.5 8.2 L16 1.2" fill="none" stroke="#3a3a3a" stroke-width="1.7"/></svg>
<div style="position:absolute;left:409px;top:1034px;width:1560px;height:328px;box-sizing:border-box;border:2px solid #d4dee6;border-radius:4px"></div>
<div style="position:absolute;left:421px;top:1033px;width:212px;height:4px;background:#f0f0f0"></div>
<div class="t" style="left:431.00px;top:1020px;font-size:22.2px;color:#2a2a2a;transform:scale(1.0000,1.1523);transform-origin:left 18px;">Scheduling Factors</div>
<div class="t" style="left:513.20px;top:1062px;font-size:24px;color:#2a2a2a;transform:scale(1.0148,1.0659);transform-origin:left 20px;">Scheduling Blocks:</div>
<div style="position:absolute;left:737px;top:1050px;width:144px;height:41px;box-sizing:border-box;background:#f0f0f0;border:2px solid #a6a8ae"></div>
<div class="t" style="right:1113.50px;top:1062px;font-size:22px;color:#2a2a2a;transform:scale(1.0000,1.1628);transform-origin:right 18px;">1</div>
<div class="t" style="left:591.40px;top:1114px;font-size:24px;color:#2a2a2a;transform:scale(1.0171,1.0659);transform-origin:left 20px;">Scheduling:</div>
<div style="position:absolute;left:739px;top:1102px;width:420px;height:140px;box-sizing:border-box;border:2px solid #d4dee6;border-radius:4px"></div>
<div class="t" style="left:941.70px;top:1128px;font-size:24px;color:#2a2a2a;transform:scale(0.9896,1.0659);transform-origin:left 20px;">Start-To-Start:</div>
<svg style="position:absolute;left:1109px;top:1124px" width="27" height="27" viewBox="0 0 27 27"><circle cx="13.5" cy="13.5" r="12.3" fill="none" stroke="#c6c6c6" stroke-width="1.4"/></svg>
<div class="t" style="left:926.00px;top:1164px;font-size:24px;color:#2a2a2a;transform:scale(1.0049,1.0659);transform-origin:left 20px;">Finish-To-Start:</div>
<svg style="position:absolute;left:1109px;top:1160px" width="27" height="27" viewBox="0 0 27 27"><circle cx="13.5" cy="13.5" r="13" fill="#a8c4e0"/><circle cx="13.5" cy="13.5" r="5.3" fill="#ececec"/></svg>
<div class="t" style="left:909.80px;top:1200px;font-size:24px;color:#2a2a2a;transform:scale(1.0207,1.0659);transform-origin:left 20px;">Finish-To-Finish:</div>
<svg style="position:absolute;left:1109px;top:1196px" width="27" height="27" viewBox="0 0 27 27"><circle cx="13.5" cy="13.5" r="12.3" fill="none" stroke="#c6c6c6" stroke-width="1.4"/></svg>
<div class="t" style="left:519.90px;top:1266px;font-size:24px;color:#2a2a2a;transform:scale(1.0171,1.0659);transform-origin:left 20px;">Send Ahead Type:</div>
<div style="position:absolute;left:737px;top:1256px;width:424px;height:44px;box-sizing:border-box;background:#f0f0f0;border:2px solid #a6a8ae"></div>
<div class="t" style="left:751.80px;top:1268px;font-size:22px;color:#2a2a2a;transform:scale(1.0000,1.1628);transform-origin:left 18px;">Hours</div>
<div style="position:absolute;left:1123px;top:1258px;width:36px;height:40px;background:#fff"></div>
<div style="position:absolute;left:1123px;top:1260px;width:34px;height:36px;box-sizing:border-box;background:#fdfdfd;border:2px solid #d0d0d0;border-right-color:#c4c4c4;border-bottom-color:#bdbdbd"></div>
<svg style="position:absolute;left:1131px;top:1276px" width="18" height="10" viewBox="0 0 18 10"><path d="M1 1.2 L8.5 8.2 L16 1.2" fill="none" stroke="#3a3a3a" stroke-width="1.7"/></svg>
<div class="t" style="left:512.00px;top:1318px;font-size:24px;color:#2a2a2a;transform:scale(0.9966,1.0659);transform-origin:left 20px;">Send Ahead Offset:</div>
<div style="position:absolute;left:737px;top:1308px;width:144px;height:42px;box-sizing:border-box;background:#f0f0f0;border:2px solid #a6a8ae"></div>
<div class="t" style="right:1112.00px;top:1320px;font-size:22px;color:#2a2a2a;transform:scale(1.0000,1.1628);transform-origin:right 18px;">0.00</div>
<div class="t" style="left:1232.80px;top:1062px;font-size:24px;color:#2a2a2a;transform:scale(1.0068,1.0659);transform-origin:left 20px;">Auto Receive into Inventory:</div>
<div style="position:absolute;left:1553px;top:1056px;width:26px;height:26px;box-sizing:border-box;border:2px solid #c3c3c3;border-radius:4px;background:#f0f0f0"></div>
<div class="t" style="left:1363.70px;top:1110px;font-size:24px;color:#2a2a2a;transform:scale(1.0032,1.0659);transform-origin:left 20px;">Final Operation:</div>
<div style="position:absolute;left:1553px;top:1104px;width:26px;height:26px;box-sizing:border-box;border:2px solid #c3c3c3;border-radius:4px;background:#f0f0f0"></div>
<div class="t" style="left:1315.70px;top:1158px;font-size:24px;color:#2a2a2a;transform:scale(0.9905,1.0659);transform-origin:left 20px;">First Article Quantity:</div>
<div style="position:absolute;left:1553px;top:1148px;width:180px;height:42px;box-sizing:border-box;background:#f0f0f0;border:2px solid #a6a8ae"></div>
<div class="t" style="right:259.50px;top:1160px;font-size:22px;color:#2a2a2a;transform:scale(1.0000,1.1628);transform-origin:right 18px;">0.00</div>
<div class="t" style="left:1392.80px;top:1210px;font-size:24px;color:#2a2a2a;transform:scale(0.9961,1.0659);transform-origin:left 20px;">Setup Group:</div>
<div style="position:absolute;left:1553px;top:1200px;width:400px;height:44px;box-sizing:border-box;background:#f0f0f0;border:2px solid #a6a8ae"></div>
<div style="position:absolute;left:1915px;top:1202px;width:36px;height:40px;background:#fff"></div>
<div style="position:absolute;left:1915px;top:1204px;width:34px;height:36px;box-sizing:border-box;background:#fdfdfd;border:2px solid #d0d0d0;border-right-color:#c4c4c4;border-bottom-color:#bdbdbd"></div>
<svg style="position:absolute;left:1923px;top:1220px" width="18" height="10" viewBox="0 0 18 10"><path d="M1 1.2 L8.5 8.2 L16 1.2" fill="none" stroke="#3a3a3a" stroke-width="1.7"/></svg>
<div style="position:absolute;left:473px;top:1045px;width:498px;height:71px;box-sizing:border-box;border:15px solid #e41c1c"></div>
</body></html>
